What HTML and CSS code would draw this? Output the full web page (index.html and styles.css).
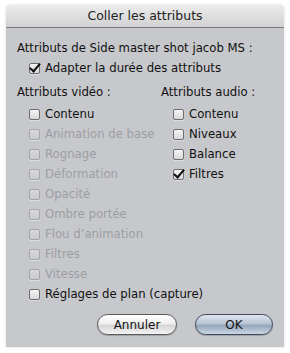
FILE: index.html
```html
<!DOCTYPE html>
<html lang="fr">
<head>
    <meta charset="UTF-8">
    <title>Coller les attributs</title>
    <link rel="stylesheet" href="styles.css">
</head>
<body>
  <div class="window">
    <div class="titlebar">Coller les attributs</div>

    <div class="content">
      <div class="label">Attributs de Side master shot jacob MS :</div>
      <div class="row indent">
        <span class="check checked"></span>Adapter la durée des attributs
      </div>

      <div class="columns">
        <div class="col video">
          <div class="label head">Attributs vidéo :</div>
          <div class="row indent"><span class="check"></span>Contenu</div>
          <div class="row indent disabled"><span class="check"></span>Animation de base</div>
          <div class="row indent disabled"><span class="check"></span>Rognage</div>
          <div class="row indent disabled"><span class="check"></span>Déformation</div>
          <div class="row indent disabled"><span class="check"></span>Opacité</div>
          <div class="row indent disabled"><span class="check"></span>Ombre portée</div>
          <div class="row indent disabled"><span class="check"></span>Flou d’animation</div>
          <div class="row indent disabled"><span class="check"></span>Filtres</div>
          <div class="row indent disabled"><span class="check"></span>Vitesse</div>
          <div class="row indent wide"><span class="check"></span>Réglages de plan (capture)</div>
        </div>
        <div class="col audio">
          <div class="label head">Attributs audio :</div>
          <div class="row indent"><span class="check"></span>Contenu</div>
          <div class="row indent"><span class="check"></span>Niveaux</div>
          <div class="row indent"><span class="check"></span>Balance</div>
          <div class="row indent"><span class="check checked"></span>Filtres</div>
        </div>
      </div>

      <div class="buttons">
        <button class="btn">Annuler</button>
        <button class="btn btn-default">OK</button>
      </div>
    </div>
  </div>
</body>
</html>
```

FILE: styles.css
```css
* {
    margin: 0;
    padding: 0;
    box-sizing: border-box;
}

body {
    width: 290px;
    height: 353px;
    background: #fff;
    font-family: "DejaVu Sans", sans-serif;
    font-size: 11.7px;
    color: #111;
    padding: 5px 6px 6px 6px;
    overflow: hidden;
}

.window {
    height: 342px;
    background: #c7c8cc;
    border-radius: 5px 5px 0 0;
    box-shadow: 0 0 3px rgba(0,0,0,0.15);
    display: flex;
    flex-direction: column;
}

.titlebar {
    height: 23px;
    line-height: 22px;
    text-align: center;
    font-size: 12.5px;
    color: #222;
    background: linear-gradient(#ececec, #d2d2d2);
    border-radius: 5px 5px 0 0;
    border-bottom: 1px solid #7c7c7c;
}

.content {
    padding: 10px 0 0 11px;
    flex: 1;
    display: flex;
    flex-direction: column;
}

.label {
    height: 20px;
    line-height: 20px;
    white-space: nowrap;
}

.label.head {
    margin-bottom: 2px;
}

.row {
    height: 20px;
    line-height: 20px;
    display: flex;
    align-items: center;
    white-space: nowrap;
}

.indent {
    padding-left: 12px;
}

.columns {
    display: flex;
    margin-top: 4px;
}

.col.video {
    width: 144px;
}

.col.audio .row {
    padding-left: 12px;
}

.row.wide {
    width: 260px;
}

.disabled {
    color: #9d9ea3;
}

.check {
    width: 11px;
    height: 11px;
    margin-right: 5px;
    border: 1px solid #6e6e6e;
    border-radius: 2px;
    background: linear-gradient(#f4f4f4, #d8d8d8);
    box-shadow: 0 1px 0 rgba(255,255,255,0.4);
    flex-shrink: 0;
    position: relative;
}

.disabled .check {
    border-color: #a4a5a9;
    background: linear-gradient(#d8d8db, #cacbce);
}

.checked::after {
    content: "";
    position: absolute;
    left: 2px;
    top: -3px;
    width: 4px;
    height: 9px;
    border-right: 2px solid #111;
    border-bottom: 2px solid #111;
    transform: rotate(40deg);
}

.buttons {
    display: flex;
    justify-content: flex-end;
    gap: 18px;
    padding-right: 11px;
    margin-top: 10px;
}

.btn {
    width: 80px;
    height: 21px;
    border: 1px solid #5a5a5a;
    border-radius: 11px;
    font-family: "DejaVu Sans", sans-serif;
    font-size: 12px;
    color: #111;
    background: linear-gradient(#ffffff 0%, #f0f0f0 45%, #d6d6d6 55%, #f4f4f4 100%);
    box-shadow: 0 1px 1px rgba(0,0,0,0.2);
}

.btn-default {
    width: 78px;
    border-color: #3e4a5c;
    background: linear-gradient(#dfe6ef 0%, #b8c4d3 45%, #95a6bb 55%, #c9d6e4 100%);
}
```
